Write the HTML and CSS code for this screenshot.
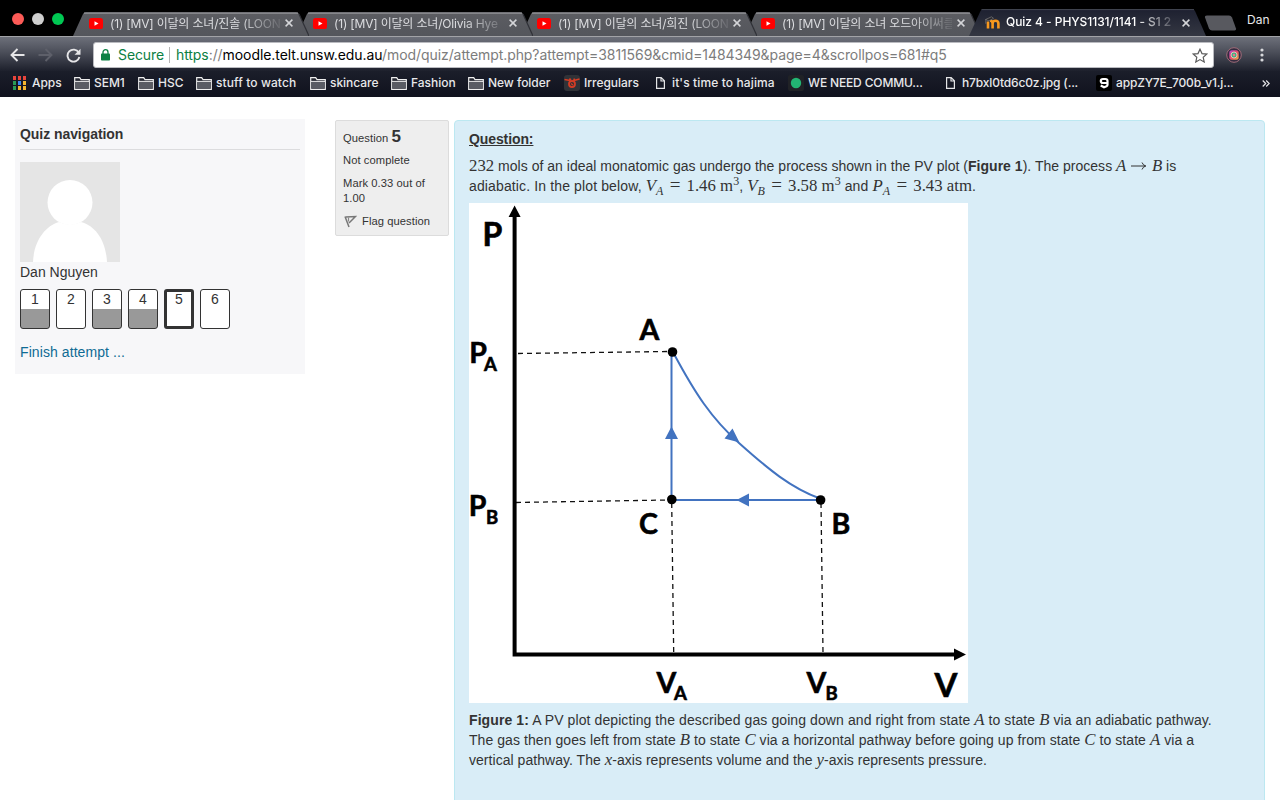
FILE: index.html
```html
<!DOCTYPE html>
<html lang="en">
<head>
<meta charset="utf-8">
<title>Quiz 4 - PHYS1131/1141 - S1 2017</title>
<link rel="stylesheet" href="styles.css">
</head>
<body>
<svg class="defs" width="0" height="0">
  <defs>
    <linearGradient id="tabfill" x1="0" y1="0" x2="0" y2="1"><stop offset="0" stop-color="#5c5d62"/><stop offset="1" stop-color="#54565c"/></linearGradient>
    <linearGradient id="activefill" x1="0" y1="0" x2="0" y2="1"><stop offset="0" stop-color="#1d2030"/><stop offset="1" stop-color="#343742"/></linearGradient>
    <linearGradient id="insta" x1="0" y1="0" x2="1" y2="1"><stop offset="0" stop-color="#b04ad0"/><stop offset=".5" stop-color="#e34a67"/><stop offset="1" stop-color="#f2b544"/></linearGradient>
    <symbol id="tabshape" viewBox="0 0 236 24"><path d="M0 24 10 2q1-2 3-2H223q2 0 3 2l10 22z" fill="url(#tabfill)"/><path d="M11 1.2H225" stroke="#85868a" stroke-width="1.4"/><path d="M226 2l10 22" fill="none" stroke="#303137" stroke-width="1.2"/></symbol>
    <symbol id="yt" viewBox="0 0 14 11"><rect width="14" height="11" rx="2.6" fill="#f00"/><path d="M5.5 3.2v4.6l4-2.3z" fill="#fff"/></symbol>
    <symbol id="close" viewBox="0 0 8 8"><path d="M.6.6l6.8 6.8M7.4.6L.6 7.4" stroke="#d4d5d8" stroke-width="1.5"/></symbol>
    <symbol id="folder" viewBox="0 0 16 13"><path d="M.7 12.3V.7h5l1.3 2h8.3v9.6z" fill="#272933" stroke="#eee" stroke-width="1.2"/><path d="M1.3 5h13.4v6.6H1.3z" fill="#5a5c64"/><path d="M1 4.4h14" stroke="#eee" stroke-width="1"/></symbol>
    <symbol id="page" viewBox="0 0 9 12"><path d="M.6.6h4.6l3.2 3.2v7.6H.6zM5 .6V4h3.4" fill="none" stroke="#e4e4e6" stroke-width="1.2"/></symbol>
  </defs>
</svg>

<header class="browser">
  <div class="tabstrip">
    <div class="lights"><i class="red"></i><i class="grey"></i><i class="green"></i></div>
    <div class="tab t1"><svg class="shape"><use href="#tabshape"/></svg><svg class="fav" width="14" height="11"><use href="#yt"/></svg><span class="label">(1) [MV] 이달의 소녀/진솔 (LOON</span><svg class="x" width="8" height="8"><use href="#close"/></svg></div>
    <div class="tab t2"><svg class="shape"><use href="#tabshape"/></svg><svg class="fav" width="14" height="11"><use href="#yt"/></svg><span class="label">(1) [MV] 이달의 소녀/Olivia Hye</span><svg class="x" width="8" height="8"><use href="#close"/></svg></div>
    <div class="tab t3"><svg class="shape"><use href="#tabshape"/></svg><svg class="fav" width="14" height="11"><use href="#yt"/></svg><span class="label">(1) [MV] 이달의 소녀/희진 (LOON</span><svg class="x" width="8" height="8"><use href="#close"/></svg></div>
    <div class="tab t4"><svg class="shape"><use href="#tabshape"/></svg><svg class="fav" width="14" height="11"><use href="#yt"/></svg><span class="label">(1) [MV] 이달의 소녀 오드아이써클</span><svg class="x" width="8" height="8"><use href="#close"/></svg></div>
    <div class="tab active"><svg class="shape" viewBox="0 0 238 27"><path d="M0 27 11.500 2q1-2 3-2H223q2 0 3 2l11 25z" fill="url(#activefill)"/><path d="M12.500.6H225" stroke="#444752"/></svg><svg class="fav moodle" width="15" height="13" viewBox="0 0 15 13"><path d="M3 12.500V5.500M7.600 12.500V7.500q0-2.700-2.600-2.700M7.600 12.500V7.500q0-2.700 2.900-2.700t2.900 2.700v5" fill="none" stroke="#f8981d" stroke-width="2.600"/><path d="M.5 3.500 6.500.8l2 1.500-4.500 2.600zM.8 3.500v4.300" fill="#28282e" stroke="#8d8a86" stroke-width=".6"/></svg><span class="label">Quiz 4 - PHYS1131/1141 - S1 2</span><svg class="x" width="8" height="8"><use href="#close"/></svg></div>
    <svg class="newtab" width="33" height="16"><path d="M3 .5h22q2 0 3 2l4 11q.5 2-1.500 2H8q-2 0-3-2L1 2.500Q.5.500 3 .5z" fill="#58595f"/></svg>
    <span class="profile">Dan</span>
  </div>

  <div class="toolbar">
    <svg class="back" width="15" height="14" viewBox="0 0 15 14"><path d="M14.500 7H1.500M7.500 1 1.500 7l6 6" fill="none" stroke="#e6e6e8" stroke-width="1.900"/></svg>
    <svg class="forward" width="15" height="14" viewBox="0 0 15 14"><path d="M.5 7h13M7.500 1l6 6-6 6" fill="none" stroke="#5e606a" stroke-width="1.900"/></svg>
    <svg class="reload" width="15" height="15" viewBox="0 0 15 15"><path d="M12.700 4.500A6 6 0 1 0 13.400 9" fill="none" stroke="#e6e6e8" stroke-width="1.900"/><path d="M14.500.8v6h-6z" fill="#e6e6e8"/></svg>
    <div class="omnibox">
      <svg class="lock" width="9" height="12" viewBox="0 0 9 12"><rect y="4.500" width="9" height="7" rx=".8" fill="#0b8043"/><path d="M2 5V3.200a2.500 2.500 0 0 1 5 0V5" fill="none" stroke="#0b8043" stroke-width="1.300"/></svg>
      <span class="secure">Secure</span><i class="sep"></i>
      <span class="url"><b class="scheme">https</b>://<b class="host">moodle.telt.unsw.edu.au</b>/mod/quiz/attempt.php?attempt=3811569&amp;cmid=1484349&amp;page=4&amp;scrollpos=681#q5</span>
      <svg class="star" width="16" height="15" viewBox="0 0 16 15"><path d="M8 1.200l2 4.400 4.800.5-3.600 3.200 1 4.700L8 11.600 3.800 14l1-4.700L1.200 6.100 6 5.600z" fill="none" stroke="#5a5a5a" stroke-width="1.200"/></svg>
    </div>
    <svg class="ext" width="16" height="16" viewBox="0 0 16 16"><circle cx="8" cy="8" r="7.300" fill="#342c40" stroke="#a06b78"/><rect x="3.300" y="3.300" width="9.400" height="9.400" rx="2.500" fill="url(#insta)"/><circle cx="8" cy="8" r="3" fill="#43ad83" stroke="#f6d7c0" stroke-width=".8"/><circle cx="8" cy="8" r="1.200" fill="#e78"/></svg>
    <svg class="menu" width="4" height="14" viewBox="0 0 4 14"><g fill="#d8d9dc"><circle cx="2" cy="2" r="1.600"/><circle cx="2" cy="7" r="1.600"/><circle cx="2" cy="12" r="1.600"/></g></svg>
  </div>

  <nav class="bookmarks">
    <a class="bm b1"><svg width="13" height="14" viewBox="0 0 13 14"><path d="M0 0h3v4H0zM5 0h3v4H5zM10 0h3v4h-3z" fill="#e8453c"/><path d="M0 5h3v4H0z" fill="#2a9d57"/><path d="M5 5h3v4H5z" fill="#3b87f0"/><path d="M10 5h3v4h-3z" fill="#f3b52f"/><path d="M0 10h3v4H0z" fill="#2a9d57"/><path d="M5 10h3v4H5zM10 10h3v4h-3z" fill="#f3b52f"/></svg><span>Apps</span></a>
    <a class="bm b2"><svg width="16" height="13"><use href="#folder"/></svg><span>SEM1</span></a>
    <a class="bm b3"><svg width="16" height="13"><use href="#folder"/></svg><span>HSC</span></a>
    <a class="bm b4"><svg width="16" height="13"><use href="#folder"/></svg><span>stuff to watch</span></a>
    <a class="bm b5"><svg width="16" height="13"><use href="#folder"/></svg><span>skincare</span></a>
    <a class="bm b6"><svg width="16" height="13"><use href="#folder"/></svg><span>Fashion</span></a>
    <a class="bm b7"><svg width="16" height="13"><use href="#folder"/></svg><span>New folder</span></a>
    <a class="bm b8"><svg width="16" height="16" viewBox="0 0 16 16"><rect width="16" height="16" rx="3" fill="#303237"/><circle cx="8" cy="9" r="3" fill="none" stroke="#d33c25" stroke-width="1.800"/><path d="M.5 4.500l5.500 1M15.500 4l-5.500 1.500M5.500 3.500l1.500 2M10.500 3.500 9.500 6M7 8.500l2 1.500" stroke="#d33c25" stroke-width="1.500"/></svg><span>Irregulars</span></a>
    <a class="bm b9"><svg width="9" height="12"><use href="#page"/></svg><span>it's time to hajima</span></a>
    <a class="bm b10"><svg width="16" height="16" viewBox="0 0 16 16"><rect width="16" height="16" rx="2" fill="#202226"/><circle cx="8" cy="8" r="5.200" fill="#22b573"/></svg><span>WE NEED COMMU...</span></a>
    <a class="bm b11"><svg width="9" height="12"><use href="#page"/></svg><span>h7bxl0td6c0z.jpg (...</span></a>
    <a class="bm b12"><svg width="16" height="16" viewBox="0 0 16 16"><rect width="16" height="16" rx="2" fill="#000"/><path d="M11.500 8H7q-2.200 0-2.200-2T7 4h2.300q2.200 0 2.200 2v3.700q0 1-1 1.500L8 12.300l-3.300-1.800" fill="none" stroke="#fff" stroke-width="2.200"/></svg><span>appZY7E_700b_v1.j...</span></a>
    <span class="more"><svg width="8" height="7" viewBox="0 0 8 7"><path d="M.7.500l3 3-3 3M4.200.500l3 3-3 3" fill="none" stroke="#e4e4e6" stroke-width="1.200"/></svg></span>
  </nav>
</header>

<main class="page">
  <aside class="quiznav">
    <h2>Quiz navigation</h2>
    <svg class="avatar" width="100" height="100" viewBox="0 0 100 100"><rect width="100" height="100" fill="#e5e5e5"/><circle cx="50" cy="40.500" r="22.500" fill="#fff"/><path d="M13 100C14 79 25 64 39 60q11 5 22 0C76 64 86 79 87 100z" fill="#fff"/></svg>
    <div class="name">Dan Nguyen</div>
    <div class="buttons">
      <a class="q done">1</a><a class="q">2</a><a class="q done">3</a><a class="q done">4</a><a class="q current">5</a><a class="q">6</a>
    </div>
    <a class="finish">Finish attempt ...</a>
  </aside>

  <section class="question">
    <div class="info">
      <div class="no">Question <b>5</b></div>
      <div class="state">Not complete</div>
      <div class="grade">Mark 0.33 out of<br>1.00</div>
      <div class="flag"><svg width="13" height="13" viewBox="0 0 13 13"><path d="M1 1.500l4 10.500M1.500 2l10-.5L5 8" fill="none" stroke="#777" stroke-width="1.500"/><path d="M4.500 2.500v4" fill="none" stroke="#888" stroke-width="1.200"/></svg><span>Flag question</span></div>
    </div>
    <article class="formulation">
      <h3>Question:</h3>
      <div class="line l1"><span class="m">232</span> mols of an ideal monatomic gas undergo the process shown in the PV plot (<b>Figure 1</b>). The process <span class="m"><i>A</i> <svg class="arr" width="16" height="10" viewBox="0 0 16 10"><path d="M0 5h14.500M11 1.500q1 2.800 3.800 3.500Q12 5.700 11 8.500" fill="none" stroke="#333"/></svg> <i>B</i></span> is</div>
      <div class="line l2">adiabatic. In the plot below, <span class="m"><i>V<sub>A</sub></i><u>=</u>1.46 m<sup>3</sup></span>, <span class="m"><i>V<sub>B</sub></i><u>=</u>3.58 m<sup>3</sup></span> and <span class="m"><i>P<sub>A</sub></i><u>=</u>3.43 atm</span>.</div>
      <svg class="plot" width="499" height="500" viewBox="469 203 499 500">
        <rect x="469" y="203" width="499" height="500" fill="#fff"/>
        <g fill="none" stroke="#111" stroke-width="1.300" stroke-dasharray="5 4">
          <path d="M518 353.500 668 351.500"/><path d="M516 502.500 668 500"/><path d="M671.700 503 673.700 653"/><path d="M821 503 823 653"/>
        </g>
        <path d="M514.600 215V654.500H956" fill="none" stroke="#000" stroke-width="4"/>
        <path d="M514.600 205.500l6 11.500h-12zM966 654.500l-12-6v12z"/>
        <path d="M671.500 499V352M672 500H820M674 354C695 393 711 418 739 443 768 469 791 488 820 498.500" fill="none" stroke="#4273c0" stroke-width="2"/>
        <path d="M671.500 426.500l6.500 12.500h-13zM736.500 500l12.500-6.500v13zM739.500 442.500l-15-4 8-10z" fill="#4273c0"/>
        <circle cx="672.500" cy="352" r="4.800"/><circle cx="671.800" cy="499.500" r="4.800"/><circle cx="820.600" cy="500" r="4.800"/>
        <g class="lab">
          <text x="482.500" y="245.500" font-size="32">P</text><text x="934.500" y="696.500" font-size="33">V</text>
          <text x="639.500" y="339.500">A</text><text x="639" y="533.500">C</text><text x="831.500" y="533.500">B</text>
          <text x="469.300" y="362.500">P</text><text x="484" y="371" class="s">A</text>
          <text x="468.800" y="515.700">P</text><text x="486" y="523.500" class="s">B</text>
          <text x="656.500" y="692.500">V</text><text x="674" y="700.300" class="s">A</text>
          <text x="806.500" y="692.500">V</text><text x="825.500" y="700.300" class="s">B</text>
        </g>
      </svg>
      <div class="caption">
        <div class="line l3"><b>Figure 1:</b> A PV plot depicting the described gas going down and right from state <i class="m">A</i> to state <i class="m">B</i> via an adiabatic pathway.</div>
        <div class="line l4">The gas then goes left from state <i class="m">B</i> to state <i class="m">C</i> via a horizontal pathway before going up from state <i class="m">C</i> to state <i class="m">A</i> via a</div>
        <div class="line l5">vertical pathway. The <i class="m">x</i>-axis represents volume and the <i class="m">y</i>-axis represents pressure.</div>
      </div>
    </article>
  </section>
</main>
</body>
</html>
```

FILE: styles.css
```css
* { box-sizing: border-box; }
body { margin: 0; width: 1280px; height: 800px; overflow: hidden; background: #fff; color: #333; font: 14px/20px "Liberation Sans", Arial, sans-serif; display: flex; flex-direction: column; }
svg { flex: none; display: block; }
.defs { position: absolute; }

.browser { flex: none; height: 97px; font-family: Inter, "Noto Sans CJK KR", sans-serif; color: #e8e8ea; background: #000; }
.tabstrip { height: 36px; display: flex; align-items: flex-end; }
.lights { width: 73px; height: 36px; padding: 13px 0 0 12px; display: flex; gap: 8px; flex: none; }
.lights i { width: 12px; height: 12px; border-radius: 50%; }
.red { background: #fc5b57; }
.grey { background: #cfcfcf; }
.green { background: #00c853; }
.tab { position: relative; isolation: isolate; flex: none; width: 236px; margin-right: -12px; height: 24px; padding: 0 16px; display: flex; align-items: center; font-size: 12px; color: #dcdde0; }
.t1 { z-index: 4; }
.t2 { z-index: 3; }
.t3 { z-index: 2; }
.t4 { z-index: 1; }
.shape { position: absolute; inset: 0; width: 100%; height: 100%; z-index: -1; }
.fav { margin: -2px 7px 0 0; }
.label { width: 170px; margin-right: 5px; line-height: 24px; height: 24px; overflow: hidden; white-space: nowrap; letter-spacing: -.18px; -webkit-mask-image: linear-gradient(90deg, #000 76%, rgba(0,0,0,.15) 99%); mask-image: linear-gradient(90deg, #000 76%, rgba(0,0,0,.15) 99%); }
.tab .x { margin-top: -2px; }
.active { z-index: 5; width: 238px; height: 27px; color: #fff; }
.active .label { font-weight: 500; line-height: 26px; height: 27px; letter-spacing: -.05px; margin-right: 6px; }
.active .x { margin-top: 0; }
.active .moodle { margin: 0 6px 0 0; }
.newtab { margin: 0 0 5px 9px; }
.profile { margin: 0 0 6px 10px; font-size: 12px; line-height: 20px; }

.toolbar { height: 35px; border-top: 1px solid #a2a3a7; background: linear-gradient(#6d707a, #4b4e59 45%, #1d202c); display: flex; align-items: center; padding: 2px 16px 0 10px; }
.forward { margin-left: 13px; }
.reload { margin-left: 13px; }
.omnibox { margin-left: 12px; width: 1122px; height: 26px; background: #fff; border: 1px solid #babbc0; border-radius: 3px; display: flex; align-items: center; color: #7c7c7c; font-size: 14px; padding: 0 5px 0 7px; }
.secure { margin-left: 8px; color: #0b8043; width: 45px; letter-spacing: -.1px; }
.sep { width: 1px; height: 16px; background: #b5b5b5; margin: 0 6px; }
.url { white-space: nowrap; flex: 1; letter-spacing: -.075px; }
.url b { font-weight: 400; }
.url .scheme { color: #0b8043; }
.url .host { color: #000; }
.ext { margin-left: 12px; }
.menu { margin-left: 18px; }

.bookmarks { height: 26px; padding-bottom: 2px; background: linear-gradient(#1b1e2a, #10121d); display: flex; align-items: center; font-size: 12px; font-weight: 500; line-height: 18px; }
.bm { display: flex; align-items: center; gap: 4px; flex: none; white-space: nowrap; letter-spacing: -.03px; }
.b1 { margin-left: 13px; width: 61px; gap: 6px; }
.b2 { width: 64px; }
.b3 { width: 58px; }
.b4 { width: 114px; letter-spacing: .1px; }
.b5 { width: 81px; }
.b6 { width: 77px; }
.b7 { width: 96px; }
.b8 { width: 92px; }
.b9 { width: 132px; gap: 7px; letter-spacing: .12px; }
.b10 { width: 158px; letter-spacing: -.15px; }
.b11 { width: 150px; gap: 7px; letter-spacing: -.15px; }
.b12 { width: 166px; letter-spacing: -.17px; }

.page { flex: 1; display: flex; gap: 30px; padding: 22px 15px 0; align-items: flex-start; }
.quiznav { width: 290px; height: 255px; background: #f7f7f9; padding: 0 5px; flex: none; }
.quiznav h2 { margin: 0 0 12px; height: 31px; padding-top: 5px; border-bottom: 1px solid #dcdcde; font-size: 14px; line-height: 20px; letter-spacing: -.06px; }
.name { line-height: 20px; }
.buttons { display: flex; gap: 6px; margin-top: 7px; }
.q { width: 30px; height: 40px; border: 1px solid #333; border-radius: 3px; text-align: center; line-height: 19px; background: #fff; }
.done { background: linear-gradient(#fff 19px, #999 19px); }
.current { border-width: 3px; line-height: 15px; }
.finish { display: block; margin-top: 13px; color: #0f6b94; letter-spacing: .08px; }

.question { display: flex; gap: 5px; align-items: flex-start; margin-top: 1px; }
.info { width: 114px; height: 116px; background: #eee; border: 1px solid #dcdcdc; border-radius: 2px; padding: 7px 7px 0; font-size: 11.200px; line-height: 15px; letter-spacing: .07px; display: flex; flex-direction: column; gap: 8px; white-space: nowrap; }
.no { line-height: 18px; margin-bottom: -2px; }
.no b { font-size: 17px; }
.flag { display: flex; gap: 5px; align-items: center; padding-left: 1px; }
.formulation { width: 811px; height: 700px; background: #d9edf7; border: 1px solid #bce8f1; border-radius: 4px; padding: 8px 14px; }
.formulation h3 { margin: 0 0 7px; font-size: 14px; line-height: 20px; text-decoration: underline; letter-spacing: -.1px; }
.line { height: 20px; line-height: 20px; white-space: nowrap; }
.l1 { letter-spacing: .02px; }
.l2 { letter-spacing: .13px; }
.l3 { letter-spacing: .09px; }
.l4 { letter-spacing: .065px; }
.l5 { letter-spacing: .04px; }
.m { font-family: "Liberation Serif", "Times New Roman", serif; font-size: 16.800px; line-height: 0; letter-spacing: 0; }
.m sub, .m sup { font-size: 12px; line-height: 0; }
.m sub { vertical-align: -4px; }
.m sup { vertical-align: 6px; }
.m u { text-decoration: none; font-size: 19px; margin: 0 6px 0 6.500px; }
.arr { display: inline-block; margin: 0 .6px; }
.plot { margin-top: 7px; }
.caption { margin-top: 7px; }
.lab { font-family: Lato, sans-serif; font-weight: 700; font-size: 28.500px; stroke: #000; stroke-width: .6px; }
.lab .s { font-size: 18.500px; }
```
